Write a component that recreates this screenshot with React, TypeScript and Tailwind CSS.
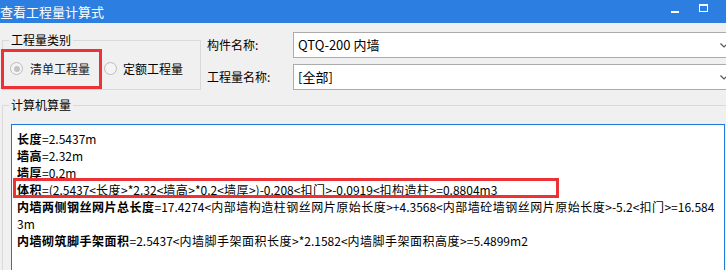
import React from "react";

const lines: { label: string; rest: string; wrap?: string }[] = [
  { label: "长度", rest: "=2.5437m" },
  { label: "墙高", rest: "=2.32m" },
  { label: "墙厚", rest: "=0.2m" },
  {
    label: "体积",
    rest: "=(2.5437<长度>*2.32<墙高>*0.2<墙厚>)-0.208<扣门>-0.0919<扣构造柱>=0.8804m3",
  },
  {
    label: "内墙两侧钢丝网片总长度",
    rest: "=17.4274<内部墙构造柱钢丝网片原始长度>+4.3568<内部墙砼墙钢丝网片原始长度>-5.2<扣门>=16.584",
    wrap: "3m",
  },
  {
    label: "内墙砌筑脚手架面积",
    rest: "=2.5437<内墙脚手架面积长度>*2.1582<内墙脚手架面积高度>=5.4899m2",
  },
];

// CJK glyphs in the original are a touch wider than Noto's
function Runs({ text }: { text: string }) {
  const parts = text.split(/([\u4e00-\u9fff]+)/).filter(Boolean);
  return (
    <>
      {parts.map((p, i) =>
        /[\u4e00-\u9fff]/.test(p) ? (
          <span key={i} className="tracking-[0.5px]">
            {p}
          </span>
        ) : (
          <span key={i}>{p}</span>
        )
      )}
    </>
  );
}

function Radio({ checked }: { checked?: boolean }) {
  return (
    <span className="w-[13px] h-[13px] rounded-full border border-[#bcbcbc] bg-[#f4f4f4] flex items-center justify-center shrink-0">
      {checked && <span className="w-[6px] h-[6px] rounded-full bg-[#c4c4c4]" />}
    </span>
  );
}

function Combo({ value }: { value: string }) {
  return (
    <div className="w-[440px] h-[26px] shrink-0 bg-white border border-[#ababab] flex items-center pl-[4px] pr-[4px] text-[13px] text-black">
      <span className="flex-1">{value}</span>
      <svg width="8" height="5" viewBox="0 0 8 5" className="mt-[1px]">
        <path d="M0.5 0.5 L4 4 L7.5 0.5" fill="none" stroke="#555" strokeWidth="1.2" />
      </svg>
    </div>
  );
}

export default function App() {
  return (
    <div
      className="relative w-[726px] h-[270px] overflow-hidden bg-[#f0f0f0] text-[12px] text-black"
      style={{ fontFamily: '"Noto Sans CJK SC", "Microsoft YaHei", sans-serif' }}
    >
      {/* title bar */}
      <div className="h-[23px] bg-[#2c7fe0] flex items-center text-white text-[13px]">
        <span className="flex-1 leading-none -mt-[1px]">查看工程量计算式</span>
        <span className="w-[8px] h-[2px] bg-white mr-[20px] mt-[1px]" />
        <span className="w-[9px] h-[8px] border border-white border-t-2 mr-[18px] -mt-[8px]" />
      </div>

      {/* top area */}
      <div className="flex pt-[9px]">
        <fieldset className="ml-[2px] w-[199px] h-[58px] shrink-0 border border-[#d9d9d9]">
          <legend className="ml-[6px] px-[2px] leading-[16px]">工程量类别</legend>
          <div className="flex items-center h-[41px] pl-[7px]">
            <Radio checked />
            <span className="ml-[7px] text-[#222]">清单工程量</span>
            <span className="ml-[14px]">
              <Radio />
            </span>
            <span className="ml-[6px]">定额工程量</span>
          </div>
        </fieldset>

        <div className="ml-[6px] flex flex-col gap-[6px] shrink-0">
          <div className="flex items-center">
            <span className="w-[86px] shrink-0">构件名称:</span>
            <Combo value="QTQ-200 内墙" />
          </div>
          <div className="flex items-center">
            <span className="w-[86px] shrink-0">工程量名称:</span>
            <Combo value="[全部]" />
          </div>
        </div>
      </div>

      {/* computed quantities */}
      <fieldset className="mt-[7px] ml-[2px] w-[740px] h-[200px] border border-[#d9d9d9]">
        <legend className="ml-[6px] px-[2px] leading-[16px]">计算机算量</legend>
        <div className="ml-[8px] mt-[11px] w-[714px] h-[170px] bg-white border border-[#1b7ad8] pl-[5px] pt-[5px] leading-[17px] whitespace-nowrap">
          {lines.map((l) => (
            <div key={l.label}>
              <span className="font-bold tracking-[0.5px]">{l.label}</span>
              <Runs text={l.rest} />
              {l.wrap && (
                <>
                  <br />
                  <span>{l.wrap}</span>
                </>
              )}
            </div>
          ))}
        </div>
      </fieldset>

      {/* red annotation boxes */}
      <div className="absolute left-[1px] top-[49px] w-[101px] h-[40px] border-[3px] border-[#ec3237] pointer-events-none" />
      <div className="absolute left-[13px] top-[178px] w-[546px] h-[20px] border-[3px] border-[#ec3237] pointer-events-none" />
    </div>
  );
}
